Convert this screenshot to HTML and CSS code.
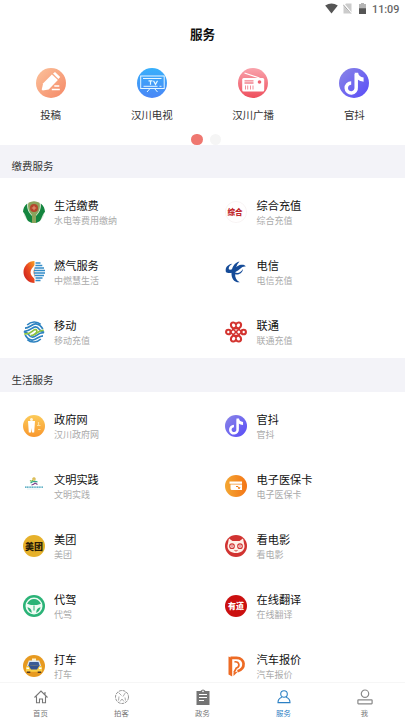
FILE: index.html
```
<!DOCTYPE html>
<html>
<head>
<meta charset="utf-8">
<title>服务</title>
<link rel="stylesheet" href="styles.css">
</head>
<body>
<svg class="defs" aria-hidden="true">
  <defs>
    <linearGradient id="peach" x1="0" y1="0" x2="1" y2="1"><stop offset="0" stop-color="#fbc29b"/><stop offset="1" stop-color="#f58866"/></linearGradient>
    <linearGradient id="blue" x1="0" y1="0" x2="0" y2="1"><stop offset="0" stop-color="#38b0fb"/><stop offset="1" stop-color="#4a86f6"/></linearGradient>
    <linearGradient id="pink" x1="0" y1="0" x2="0" y2="1"><stop offset="0" stop-color="#f9a3ac"/><stop offset="1" stop-color="#ee4f5d"/></linearGradient>
    <linearGradient id="violet" x1="0" y1="0" x2="1" y2="1"><stop offset="0" stop-color="#8b87e6"/><stop offset="1" stop-color="#584bf8"/></linearGradient>
    <linearGradient id="gold" x1="0" y1="0" x2="0" y2="1"><stop offset="0" stop-color="#fccb5a"/><stop offset="1" stop-color="#f8962c"/></linearGradient>
    <linearGradient id="orange" x1="0" y1="0" x2="1" y2="0"><stop offset="0" stop-color="#f3a733"/><stop offset="1" stop-color="#f47516"/></linearGradient>
    <linearGradient id="flame" x1="1" y1="0" x2="0" y2="1"><stop offset="0" stop-color="#f7a324"/><stop offset=".45" stop-color="#e94a20"/><stop offset="1" stop-color="#c4141c"/></linearGradient>
    <symbol id="note" viewBox="0 0 30 30">
      <circle cx="15" cy="15" r="15" fill="url(#violet)"/>
      <path d="M17.2 5.800V19.400A5 5 0 1 1 12.200 15" fill="none" stroke="#fff" stroke-width="3.500"/>
      <path d="M15.500 4.700h3.600c.5 3 2.300 4.300 5.500 4.800v4.200c-2.700-.2-4.200-.8-6-2.100z" fill="#fff"/>
    </symbol>
  </defs>
</svg>
<div class="screen">
  <div class="status">
    <svg class="wifi" viewBox="0 0 13 11"><path d="M.2 2.600Q6.500-1.600 12.800 2.600L6.500 10.600z" fill="#555"/></svg>
    <svg class="sim" viewBox="0 0 9 11"><path d="M3 .5h5.500v10H.5V3z" fill="#ccc"/><path d="M.4 1l8 9.500" stroke="#fff" stroke-width="2"/><path d="M.2 1.700l7.600 8.800" stroke="#999" stroke-width=".9"/></svg>
    <svg class="battery" viewBox="0 0 7 11"><path d="M2 0h3v1h2v4.500H0V1h2z" fill="#b5b5b5"/><path d="M0 5.200h7V11H0z" fill="#555"/></svg>
    <span class="time">11:09</span>
  </div>
  <h1 class="title">服务</h1>
  <div class="shortcuts">
    <div class="shortcut">
      <svg class="big" viewBox="0 0 30 30"><circle cx="15" cy="15" r="15" fill="url(#peach)"/><path d="M5.700 21.500l1.500-6.200 8.700-8.800 6 5.400-9.200 9.500-6 1.200z" fill="#fff"/><path d="M17 5.500l2-1.500 5.200 5-1.800 2.100z" fill="#fff"/><path d="M18.300 18h5M15.800 21.500h8" stroke="#fff" stroke-width="1.400"/></svg>
      <span>投稿</span>
    </div>
    <div class="shortcut">
      <svg class="big" viewBox="0 0 30 30"><circle cx="15" cy="15" r="15" fill="url(#blue)"/><g fill="none" stroke="#e6f7ff"><rect x="3.700" y="8" width="23.500" height="12.500"/><path d="M6 10.500h18.500M6.500 18.300h14M22.500 18.300h2M13 20.500l-3 3.500M17.500 20.500l3 3.500"/><path d="M11.500 12.800h4M13.500 12.800v4M16.500 12.800l2 3.600 2-3.600" stroke-width="1.200"/></g></svg>
      <span>汉川电视</span>
    </div>
    <div class="shortcut">
      <svg class="big" viewBox="0 0 30 30"><circle cx="15" cy="15" r="15" fill="url(#pink)"/><path d="M6.500 5l15 5" stroke="#fff" stroke-width="1.100"/><rect x="4.200" y="10" width="22" height="13.500" rx="1.500" fill="#fff"/><path d="M6.500 12.800h9M6.500 15h9" stroke="#f2838e" stroke-width="1.300"/><path d="M7.500 17.500v4M9.700 17.500v4M12.500 17.500v4M15 17.500v4" stroke="#ef7582" stroke-width=".8"/><circle cx="21.500" cy="14" r="1.800" fill="#ee6270"/></svg>
      <span>汉川广播</span>
    </div>
    <div class="shortcut">
      <svg class="big"><use href="#note"/></svg>
      <span>官抖</span>
    </div>
  </div>
  <div class="pager"><i class="tick"></i><i class="dot on"></i><i class="dot"></i></div>

  <h2 class="section">缴费服务</h2>
  <div class="grid">
    <div class="item">
      <svg class="icon" viewBox="0 0 22 22"><circle cx="11" cy="11" r="10.500" fill="#dcebd8"/><path d="M4.200 2.500C1 5 .2 8 0 11c2 1 3 6 5 9 1 .8 2.500 1.500 4 2V15C6 12 3.500 8 4.200 2.500zM17.800 2.500C21 5 21.800 8 22 11c-2 1-3 6-5 9-1 .8-2.500 1.500-4 2V15c3-3 5.500-7 4.800-12.500z" fill="#14853f"/><path d="M5.500 1.800Q11-1.500 16.500 1.800C18 8 15 12 13 14v8H9v-8C7 12 4 8 5.500 1.800z" fill="#8ba35c"/><circle cx="11" cy="7" r="4" fill="#b4452c"/><path d="M8.800 7h4.400M11 4.800v4.400" stroke="#e9a07c" stroke-width=".9"/></svg>
      <div><b>生活缴费</b><small>水电等费用缴纳</small></div>
    </div>
    <div class="item">
      <svg class="icon" viewBox="0 0 22 22"><circle cx="11" cy="11" r="10.600" fill="#fffefe" stroke="#f4ecec" stroke-width=".6"/><text class="zonghe" x="2.500" y="13.800" textLength="15" lengthAdjust="spacingAndGlyphs">综合</text></svg>
      <div><b>综合充值</b><small>综合充值</small></div>
    </div>
    <div class="item">
      <svg class="icon" viewBox="0 0 22 22"><path d="M11.500 0A11 11 0 0 0 11.500 22z" fill="url(#flame)"/><path d="M12.500 2h5M12.300 4.500h7M11.500 7h9.500M10.500 9.500H22M10.500 12H22M11.500 14.500h9.500M12.500 17h7M12.500 19.500h5" stroke="#338cc8" stroke-width="1.500"/><path d="M12.500 3.500C9.500 6.500 7.500 8.500 7.500 11.200s2 4.800 5 7.500C11.500 15.500 10.500 13 10.500 11s1-4.500 2-7.500z" fill="#fff"/></svg>
      <div><b>燃气服务</b><small>中燃慧生活</small></div>
    </div>
    <div class="item">
      <svg class="icon" viewBox="0 0 22 22"><path d="M1 11.200C-.3 7 2.500 3.600 7.300 2.800 4.300 4.800 3.200 6.800 4 8.500 8 9.500 12 4.200 16 3.800c2.300-.3 4.200.2 4.700 1.700-2.500-.3-3.700.5-5.200 2C12 10.700 6.500 13.500 1 11.200z" fill="#154b98"/><path d="M14.500.6C9.500 1.500 6.800 6.500 6.500 11.500c-.3 6 2.500 10.300 8.300 9.800-3.500-1.800-4.800-4.600-4.700-8.800.1-4 1.400-9 4.400-11.900z" fill="#154b98"/><path d="M9.500 11c3 1.800 5.800 1 8.500-3-.3 3.800-4.500 6.800-8.500 5z" fill="#154b98"/></svg>
      <div><b>电信</b><small>电信充值</small></div>
    </div>
    <div class="item">
      <svg class="icon" viewBox="0 0 22 22"><g fill="none" stroke="#2d82c0" stroke-width="1.700"><g id="wave"><path d="M4.200 4C8 .2 14 0 17.600 3.400"/><path d="M2 7.200C6.500 7 9 2.600 13 2.900c3 .2 5.200 2.400 6.800 5.100"/><path d="M1 10.300C7 10.800 9 5.800 12.500 5.800c4.500 0 3.300 5.700 8.700 5.400"/></g><use href="#wave" transform="rotate(180 11 11)"/><path d="M1.200 12.800C8 14 9.300 8.700 12.300 8.700c1.700 0 1.800 1.500 1.300 2.500-1.600 3-3.600 3.300-6 3.400" stroke="#8dc342"/><path d="M20.800 9.500C15 8.700 13.700 14 10 13.900" stroke="#8dc342"/></g></svg>
      <div><b>移动</b><small>移动充值</small></div>
    </div>
    <div class="item">
      <svg class="icon" viewBox="0 0 22 22"><g fill="none" stroke="#d3332f" stroke-width="2.100"><path d="M11 7C8.500 8.500 5.800 6.500 5.900 3.800 6 1 10 .6 11 3.500 12 .6 16 1 16.100 3.800 16.200 6.500 13.500 8.500 11 7zM11 15c-2.500-1.500-5.200.5-5.100 3.200.1 2.800 4.100 3.200 5.100.3 1 2.900 5 2.500 5.100-.3.100-2.700-2.600-4.700-5.100-3.200z"/><circle cx="3.400" cy="11" r="2.300"/><circle cx="18.600" cy="11" r="2.300"/><path d="M5.300 11L11 5.500l5.700 5.500L11 16.500zM7.500 7.500l7 7M14.500 7.500l-7 7" stroke-width="1.600"/></g></svg>
      <div><b>联通</b><small>联通充值</small></div>
    </div>
  </div>

  <h2 class="section">生活服务</h2>
  <div class="grid">
    <div class="item">
      <svg class="icon" viewBox="0 0 22 22"><circle cx="11" cy="11" r="11" fill="url(#gold)"/><circle cx="8.500" cy="4.600" r="1.500" fill="#fff6df"/><path d="M5 6h7l-.8 11.500H9L8.500 13 8 17.500H5.800z" fill="#fff"/><path d="M15.500 7v4M14 10.500h3.500M15 14.500h2.500" stroke="#fddf9e" stroke-width="1.200"/></svg>
      <div><b>政府网</b><small>汉川政府网</small></div>
    </div>
    <div class="item">
      <svg class="icon"><use href="#note"/></svg>
      <div><b>官抖</b><small>官抖</small></div>
    </div>
    <div class="item">
      <svg class="icon" viewBox="0 0 22 22"><g fill="none" stroke-width="1.200"><path d="M7 5.500q2 1.500 3-.5" stroke="#70b845"/><circle cx="11" cy="4" r="1.100" stroke="#d5b23c"/><path d="M7.500 8Q11 5.500 14.500 7" stroke="#2da58b"/><path d="M8.500 10q2.500-.5 3.500-2l2.500 1.500" stroke="#7c3e88"/></g><path d="M2 12.200h18" stroke="#359bb5" stroke-width="1.300" stroke-dasharray="1.300 .4"/><path d="M4 14h13" stroke="#c7dfe5" stroke-width=".5"/></svg>
      <div><b>文明实践</b><small>文明实践</small></div>
    </div>
    <div class="item">
      <svg class="icon" viewBox="0 0 22 22"><circle cx="11" cy="11" r="11" fill="url(#orange)"/><path d="M4.500 6.500h12.500v2.200H4.500zM5.500 9.500H17v5.500H7q-1.500 0-1.500-1.500z" fill="#fff"/><path d="M11 11.500h2l1 2.500 1-2" fill="none" stroke="#f4821e"/></svg>
      <div><b>电子医保卡</b><small>电子医保卡</small></div>
    </div>
    <div class="item">
      <svg class="icon" viewBox="0 0 22 22"><circle cx="11" cy="11" r="11" fill="#e6b12b"/><text class="meituan" x="2" y="14.500" textLength="18" lengthAdjust="spacingAndGlyphs">美团</text></svg>
      <div><b>美团</b><small>美团</small></div>
    </div>
    <div class="item">
      <svg class="icon" viewBox="0 0 22 22"><circle cx="11" cy="11" r="11" fill="#d13331"/><path d="M4 3.500l3.500 2.500h7L18 3.500c.8 3 .8 4.500 1.500 7 .5 5-4 7.500-8.500 7.500S2 15.500 2.500 10.500c.7-2.500.7-4 1.500-7z" fill="#fff0e8"/><g fill="#fff" stroke="#d13331" stroke-width="1.100"><circle cx="7" cy="11.200" r="2.300"/><circle cx="15" cy="11.200" r="2.300"/></g><path d="M7 10v2.500M15 10v2.500M9.500 15.500q1.500 1 3 0" fill="none" stroke="#d13331" stroke-width=".9"/></svg>
      <div><b>看电影</b><small>看电影</small></div>
    </div>
    <div class="item">
      <svg class="icon" viewBox="0 0 22 22"><circle cx="11" cy="11" r="11" fill="#2bb377"/><circle cx="11" cy="11" r="8.500" fill="#effbf4"/><path d="M4 8.700Q6.500 4 11 4t7 4.700l-4 1.300H8zM4.300 12.500c3.200 0 4.700 2.500 4.300 5.500Q5.500 16.500 4.300 12.500zM17.700 12.500c-3.200 0-4.700 2.500-4.300 5.500q3.100-1.500 4.300-5.500z" fill="#2bb377"/><path d="M11 10.500v5" stroke="#2bb377" stroke-width="1"/></svg>
      <div><b>代驾</b><small>代驾</small></div>
    </div>
    <div class="item">
      <svg class="icon" viewBox="0 0 22 22"><circle cx="11" cy="11" r="11" fill="#cb1010"/><text class="youdao" x="3" y="14" textLength="16" lengthAdjust="spacingAndGlyphs">有道</text></svg>
      <div><b>在线翻译</b><small>在线翻译</small></div>
    </div>
    <div class="item">
      <svg class="icon" viewBox="0 0 22 22"><circle cx="11" cy="11" r="11" fill="#e79a20"/><path d="M9 3.500h4V6H9z" fill="#fff2c9"/><path d="M5.800 5.500h10.400l2 5.500H3.800z" fill="#d9e6f5"/><path d="M6.500 7h9l1.200 4H5.300z" fill="#3b5b95"/><path d="M3 11.500q8-2 16 0v5.300H3z" fill="#fbd046"/><path d="M5.500 10.500h11l-2.500 4H8z" fill="#35538f"/><path d="M3.800 16.500h3.500V18H3.800zM14.700 16.500h3.500V18h-3.500z" fill="#513a22"/><path d="M3.500 13.300h2.500M16 13.300h2.500" stroke="#fff" stroke-width="1.400"/></svg>
      <div><b>打车</b><small>打车</small></div>
    </div>
    <div class="item">
      <svg class="icon" viewBox="0 0 22 22"><path d="M3.500 1.500L7.200 3v18.500l-3.700-2z" fill="#ed6b25"/><path d="M5.500 2.800h6c9 .3 9.500 10.700 1 13.500" fill="none" stroke="#ed6b25" stroke-width="2.700"/><path d="M9.500 6.800c5.500-.5 5.500 5.500 1.800 6.200L9 17.500" fill="none" stroke="#ed6b25" stroke-width="1.700"/><path d="M8.500 17.500l4.500-1-4.500 4.500z" fill="#ed6b25"/></svg>
      <div><b>汽车报价</b><small>汽车报价</small></div>
    </div>
  </div>

  <nav class="tabs">
    <div class="tab"><svg viewBox="0 0 16 16"><path d="M1.500 8.500L8 2l6.500 6.500M3.500 7.500v6.300h3V10h3v3.800h3V7.500M12 5.500V3" fill="none" stroke="#777" stroke-width="1.100"/></svg><span>首页</span></div>
    <div class="tab"><svg viewBox="0 0 16 16"><g fill="none" stroke="#888" stroke-width=".9"><circle cx="8" cy="8" r="6.500" stroke-dasharray="3 .8"/><path d="M4.500 3.500l3 3M11.500 3.500l-2.500 4M5 7.500l-.5 4M11 8.500l.5 3M6 12.500L8 10l2 2.500" stroke-width=".7"/></g></svg><span>拍客</span></div>
    <div class="tab"><svg viewBox="0 0 16 16"><path d="M1.500 2H5.500Q8-1 10.500 2h4v14h-13z" fill="#747474"/><path d="M4 5.500h8M4 8.500h8M4 11.500h5" stroke="#fff" stroke-width="1.200"/><circle cx="8" cy="2.400" r=".8" fill="#fff"/></svg><span>政务</span></div>
    <div class="tab active"><svg viewBox="0 0 16 16"><g fill="none" stroke="#2c80c4" stroke-width="1.100"><circle cx="8" cy="5" r="3.300"/><path d="M5.800 8.200C3.500 9 2 10.500 2 13.600h12c0-3.100-1.500-4.600-3.800-5.400"/></g></svg><span>服务</span></div>
    <div class="tab"><svg viewBox="0 0 16 16"><g fill="none" stroke="#888" stroke-width="1.200"><circle cx="8" cy="4.700" r="3.700"/><rect x=".9" y="10.800" width="14.200" height="4" rx=".5"/></g></svg><span>我</span></div>
  </nav>
</div>
</body>
</html>
```
FILE: styles.css
```
* { box-sizing: border-box; }
body {
  margin: 0;
  background: #fff;
  color: #222;
  font-family: "Noto Sans CJK SC", sans-serif;
}
.defs { position: absolute; width: 0; height: 0; }
.screen {
  width: 405px;
  height: 720px;
  overflow: hidden;
  display: flex;
  flex-direction: column;
}
svg { display: block; flex: none; }
.status {
  height: 18px;
  flex: none;
  display: flex;
  justify-content: flex-end;
  align-items: center;
  padding: 0 6px 0 0;
}
.wifi { width: 13px; height: 11px; margin: -1px 5px 0 0; }
.sim { width: 9px; height: 11px; margin: -1px 7px 0 0; }
.battery { width: 7px; height: 11px; margin: -2px 6px 0 0; }
.time { font: 500 10.800px/18px Roboto, sans-serif; color: #666; width: 27px; padding-top: 1px; white-space: nowrap; }
.title {
  margin: 0;
  height: 32px;
  flex: none;
  font-size: 12.600px;
  line-height: 32px;
  font-weight: 700;
  color: #111;
  text-align: center;
}
.shortcuts {
  display: grid;
  grid-template-columns: repeat(4, 1fr);
  height: 81px;
  flex: none;
  padding-top: 17.500px;
}
.shortcut { display: flex; flex-direction: column; align-items: center; gap: 8px; }
.shortcut span { font-size: 10.500px; line-height: 18px; color: #333; }
.big { width: 30px; height: 30px; }
.pager {
  height: 14px;
  flex: none;
  display: flex;
  align-items: flex-start;
  gap: 7px;
  padding: 2.500px 0 0 187px;
}
.tick { width: 2px; height: 1px; margin: 11px -5px 0 0; background: #333; }
.dot { width: 11.500px; height: 11.500px; border-radius: 50%; background: #f5f5f5; }
.dot.on { background: #ef7770; }
.section {
  margin: 0;
  height: 33px;
  flex: none;
  padding: 4px 0 0 11.500px;
  background: #f3f3f8;
  font-size: 10.500px;
  line-height: 34px;
  font-weight: 400;
  color: #333;
}
.grid + .section { height: 34px; padding-top: 5px; }
.grid {
  display: grid;
  grid-template-columns: 1fr 1fr;
  grid-auto-rows: 60px;
  flex: none;
}
.item { display: flex; gap: 9.500px; padding: 19px 0 0 22.500px; }
.icon { width: 22px; height: 22px; margin-top: 4px; }
.item b, .item small { display: block; white-space: nowrap; }
.item b { font-size: 11.200px; line-height: 16px; font-weight: 400; color: #111; }
.item small { margin-top: 1px; font-size: 9px; line-height: 14px; color: #aaa; }
.zonghe { font-size: 7.500px; font-weight: 900; fill: #c1272d; }
.meituan { font-size: 9px; font-weight: 900; fill: #2a1d08; }
.youdao { font-size: 8px; font-weight: 900; fill: #fff; }
.tabs {
  position: absolute;
  left: 0;
  top: 682px;
  width: 405px;
  height: 38px;
  display: grid;
  grid-template-columns: repeat(5, 1fr);
  background: #fff;
  border-top: 1px solid #f6f6f6;
}
.tab { display: flex; flex-direction: column; align-items: center; padding-top: 6px; color: #777; }
.tab svg { width: 16px; height: 16px; }
.tab span { font-size: 7.400px; line-height: 12px; margin-top: 2px; }
.tab.active { color: #2c80c4; }
```
